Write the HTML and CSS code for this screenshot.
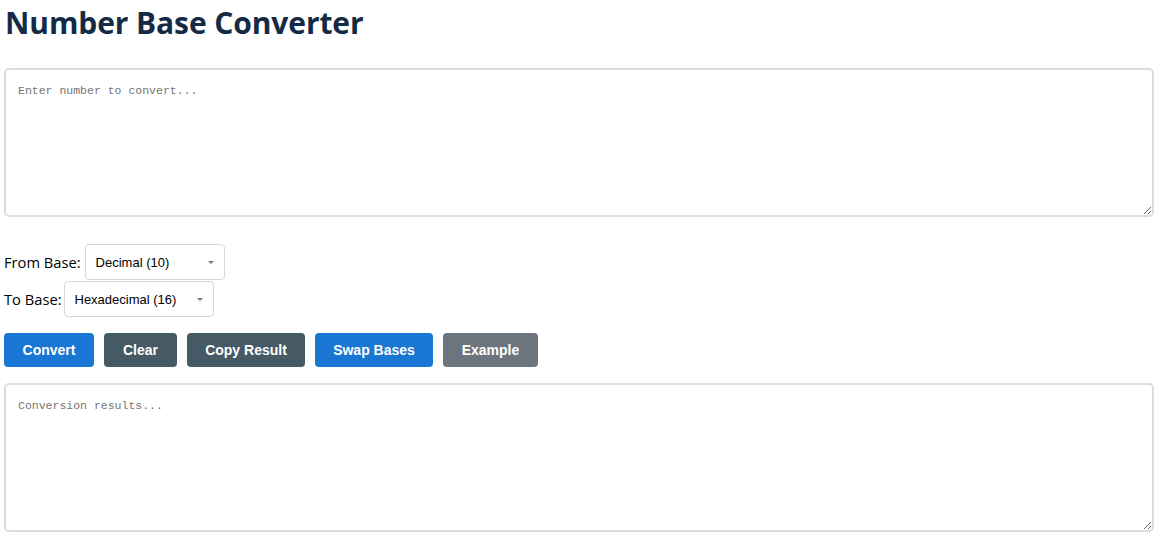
FILE: index.html
```html
<!DOCTYPE html>
<html>
<head>
<meta charset="utf-8">
<link rel="stylesheet" href="styles.css">
</head>
<body>
<div class="page">
  <h1 class="title">Number Base Converter</h1>
  <textarea class="area input-area" placeholder="Enter number to convert..."></textarea>
  <div class="controls">
    <div class="row">
      <label class="lbl">From Base:</label>
      <div class="sel sel-from"><span>Decimal (10)</span><span class="caret"></span></div>
    </div>
    <div class="row row-to">
      <label class="lbl">To Base:</label>
      <div class="sel sel-to"><span>Hexadecimal (16)</span><span class="caret"></span></div>
    </div>
  </div>
  <div class="buttons">
    <button class="btn blue b-convert">Convert</button>
    <button class="btn dark b-clear">Clear</button>
    <button class="btn dark b-copy">Copy Result</button>
    <button class="btn blue b-swap">Swap Bases</button>
    <button class="btn gray b-example">Example</button>
  </div>
  <textarea class="area output-area" placeholder="Conversion results..." readonly></textarea>
</div>
</body>
</html>
```
FILE: styles.css
```css
html, body {
  margin: 0;
  padding: 0;
  background: #fff;
}
.page {
  padding: 0 7px 0 4px;
  display: flex;
  flex-direction: column;
}
.title {
  margin: 0;
  padding-top: 3px;
  height: 51px;
  font-family: "Open Sans", "Noto Sans", sans-serif;
  font-weight: 700;
  font-size: 30px;
  line-height: 40px;
  color: #142a45;
  letter-spacing: -0.1px;
  padding-left: 1px;
}
.area {
  display: block;
  box-sizing: border-box;
  width: 1150px;
  height: 149px;
  border: 2px solid #dddddd;
  border-radius: 5px;
  padding: 14px 12px;
  font-family: "Liberation Mono", "DejaVu Sans Mono", monospace;
  font-size: 11.5px;
  color: #333;
  resize: vertical;
  outline: none;
}
.area::placeholder {
  color: #757575;
}
.input-area {
  margin-top: 14px;
}
.controls {
  margin-top: 27px;
  display: flex;
  flex-direction: column;
  gap: 1px;
}
.row {
  display: flex;
  align-items: center;
  height: 36px;
}
.lbl {
  font-family: "Open Sans", "Noto Sans", sans-serif;
  font-size: 14.7px;
  color: #000;
  margin-right: 4px;
}
.row-to .lbl {
  margin-right: 2px;
}
.sel {
  box-sizing: border-box;
  height: 36px;
  border: 1px solid #d6d6d6;
  border-radius: 4px;
  display: flex;
  align-items: center;
  justify-content: space-between;
  padding: 0 10px 0 10px;
  font-family: "Liberation Sans", Arial, sans-serif;
  font-size: 13px;
  color: #000;
}
.sel-from { width: 140px; }
.sel-to { width: 150px; }
.caret {
  width: 0;
  height: 0;
  border-left: 3.5px solid transparent;
  border-right: 3.5px solid transparent;
  border-top: 3.5px solid #777;
  margin-top: 1px;
}
.buttons {
  margin-top: 16px;
  display: flex;
  gap: 10px;
}
.btn {
  height: 34px;
  border: none;
  border-radius: 4px;
  color: #fff;
  font-family: "Liberation Sans", Arial, sans-serif;
  font-weight: 700;
  font-size: 14px;
  padding: 0;
  cursor: pointer;
}
.blue { background: #1976d2; }
.dark { background: #455a64; }
.gray { background: #6c757d; }
.b-convert { width: 90px; }
.b-clear { width: 73px; }
.b-copy { width: 118px; }
.b-swap { width: 118px; }
.b-example { width: 95px; }
.output-area {
  margin-top: 16px;
  height: 149px;
}
```
